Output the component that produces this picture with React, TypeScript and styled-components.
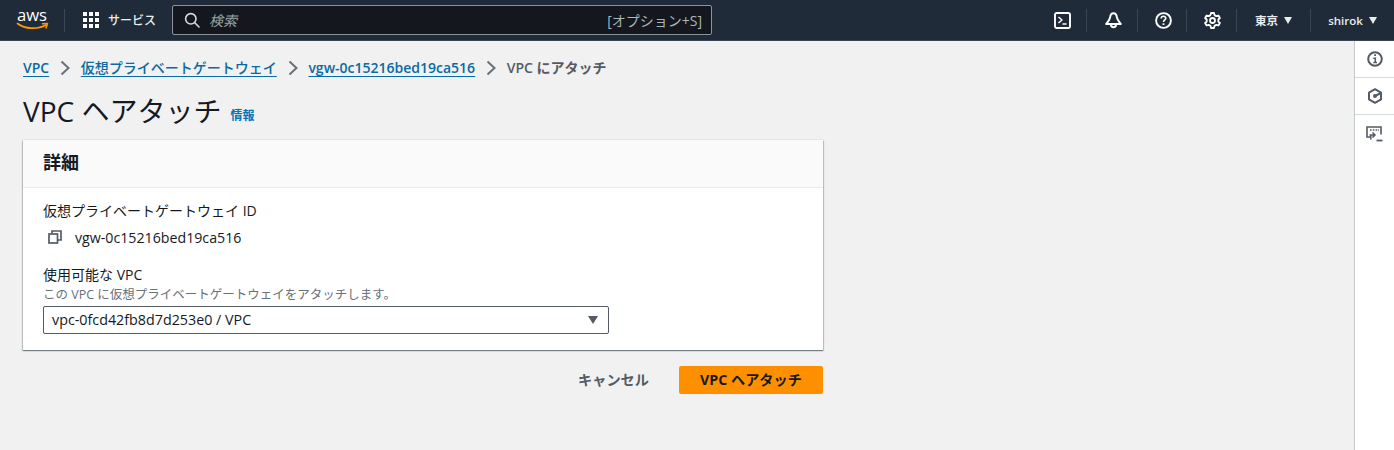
import React from "react";
import styled, { createGlobalStyle } from "styled-components";

const FONT = `"Open Sans", "Noto Sans CJK JP", sans-serif`;

const Global = createGlobalStyle`
  html, body { margin: 0; padding: 0; height: 100%; background: #f1f1f1; }
  body { font-family: ${FONT}; color: #16191f; overflow: hidden; }
  * { box-sizing: border-box; }
`;

const Page = styled.div`
  width: 1394px;
  height: 450px;
  display: flex;
  flex-direction: column;
  overflow: hidden;
`;

const TopBar = styled.header`
  height: 41px;
  flex: none;
  display: flex;
  align-items: center;
  background: #202b39;
  border-bottom: 1px solid #3a4553;
  color: #fff;
`;

const LogoSlot = styled.div`
  width: 65px;
  height: 23px;
  padding-left: 16px;
  border-right: 1px solid #3a4654;
  display: flex;
  align-items: center;
`;

const Services = styled.div`
  display: flex;
  align-items: center;
  gap: 9px;
  width: 107px;
  padding-left: 18px;
  font-size: 12px;
  font-weight: 500;
  color: #eaeded;
`;

const Search = styled.div`
  width: 540px;
  height: 30px;
  display: flex;
  align-items: center;
  padding: 0 9px 0 11px;
  background: #14171d;
  border: 1px solid #8b949c;
  border-radius: 2px;
`;

const SearchHint = styled.span`
  margin-left: 9px;
  flex: 1;
  font-style: italic;
  color: #95a5a6;
  font-size: 14px;
`;

const Shortcut = styled.span`
  color: #aab7b8;
  font-size: 14px;
`;

const TopRight = styled.div`
  margin-left: auto;
  display: flex;
  align-items: center;
  height: 23px;
`;

const IconSlot = styled.div<{ $w: number }>`
  width: ${(p) => p.$w}px;
  height: 23px;
  padding-left: 2px;
  display: flex;
  align-items: center;
  justify-content: center;
  border-right: 1px solid #3a4654;
`;

const MenuSlot = styled.div<{ $w: number; $last?: boolean }>`
  width: ${(p) => p.$w}px;
  height: 23px;
  display: flex;
  align-items: center;
  justify-content: center;
  gap: 6px;
  font-size: 11.5px;
  font-weight: 600;
  color: #eaeded;
  border-right: ${(p) => (p.$last ? "none" : "1px solid #3a4654")};
`;

const Caret = styled.span`
  width: 0;
  height: 0;
  border-left: 4.5px solid transparent;
  border-right: 4.5px solid transparent;
  border-top: 7px solid #eaeded;
`;

const Body = styled.div`
  flex: 1;
  display: flex;
  min-height: 0;
`;

const Main = styled.main`
  flex: 1;
  padding: 17px 0 0 23px;
`;

const Crumbs = styled.nav`
  height: 20px;
  display: flex;
  align-items: center;
  font-size: 14px;
  line-height: 20px;
`;

const CrumbLink = styled.a<{ $latin?: boolean }>`
  font-weight: ${(p) => (p.$latin ? 600 : 500)};
  color: #0a6aa1;
  text-decoration: underline;
  text-underline-offset: 3px;
`;

const CrumbCurrent = styled.span`
  font-weight: 600;
  color: #545b64;
`;

const CrumbSep = styled.span`
  width: 31.6px;
  display: flex;
  justify-content: center;
  align-items: center;
`;

const TitleRow = styled.div`
  margin-top: 14px;
  height: 38px;
  display: flex;
  align-items: center;
`;

const Title = styled.h1`
  margin: 0;
  font-size: 28px;
  line-height: 38px;
  font-weight: 400;
  color: #16191f;
`;

const InfoLink = styled.a`
  margin: 8px 0 0 9px;
  font-size: 12px;
  font-weight: 700;
  color: #0073bb;
`;

const Card = styled.section`
  margin-top: 10px;
  width: 800px;
  height: 210px;
  background: #fff;
  box-shadow: 0 0 1px 0 rgba(0, 28, 36, 0.3), 0 1px 1px 0 rgba(0, 28, 36, 0.3),
    1px 1px 1px 0 rgba(0, 28, 36, 0.15), -1px 1px 1px 0 rgba(0, 28, 36, 0.15);
`;

const CardHead = styled.div`
  height: 48px;
  padding: 0 0 5px 20px;
  display: flex;
  align-items: center;
  background: #fafafa;
  border-bottom: 1px solid #eaeded;
  font-size: 18px;
  font-weight: 700;
  color: #16191f;
`;

const CardBody = styled.div`
  padding: 13px 20px 0;
  display: flex;
  flex-direction: column;
`;

const Label = styled.div`
  font-size: 14px;
  line-height: 20px;
  color: #16191f;
`;

const CopyRow = styled.div`
  margin-top: 6px;
  height: 20px;
  display: flex;
  align-items: center;
  gap: 13px;
  padding-left: 5px;
  font-size: 14.2px;
  color: #16191f;
`;

const Field = styled.div`
  margin-top: 18px;
`;

const Hint = styled.div`
  margin-top: 2px;
  font-size: 12.5px;
  line-height: 15px;
  color: #687078;
`;

const Select = styled.div`
  margin-top: 4px;
  width: 566px;
  height: 28px;
  padding: 0 10px 2px 8px;
  display: flex;
  align-items: center;
  justify-content: space-between;
  background: #fff;
  border: 1px solid #545b64;
  border-radius: 2px;
  font-size: 14.3px;
  color: #16191f;
`;

const SelectCaret = styled.span`
  width: 0;
  height: 0;
  border-left: 5.5px solid transparent;
  border-right: 5.5px solid transparent;
  border-top: 8px solid #545b64;
  margin-top: 2px;
`;

const Actions = styled.div`
  width: 800px;
  margin-top: 16px;
  display: flex;
  justify-content: flex-end;
  align-items: center;
  gap: 30px;
`;

const CancelButton = styled.button`
  border: none;
  background: none;
  padding: 0 0 2px;
  font-family: inherit;
  font-size: 14.2px;
  font-weight: 700;
  color: #545b64;
`;

const PrimaryButton = styled.button`
  width: 144px;
  height: 28px;
  padding: 0 0 2px;
  border: none;
  border-radius: 2px;
  background: #fe9000;
  font-family: inherit;
  font-size: 14.2px;
  font-weight: 700;
  color: #16191f;
`;

const SideRail = styled.aside`
  width: 40px;
  flex: none;
  background: #fff;
  border-left: 1px solid #c4cacc;
  display: flex;
  flex-direction: column;
`;

const RailItem = styled.div<{ $h: number }>`
  height: ${(p) => p.$h}px;
  display: flex;
  align-items: center;
  justify-content: center;
  border-bottom: 1px solid #d5dbdb;
`;

const RailTail = styled.div`
  height: 37px;
  display: flex;
  align-items: center;
  justify-content: center;
`;

const AwsLogo = () => (
  <svg width="36" height="36" viewBox="0 0 36 36" fill="none">
    <text x="1" y="18.5" fontFamily="'Open Sans', sans-serif" fontSize="17" fill="#fff" textLength="30" lengthAdjust="spacingAndGlyphs">aws</text>
    <path d="M1.5 21.5 C9 27.5 22 27.5 30 23" stroke="#ff9900" strokeWidth="1.7" strokeLinecap="round" />
    <path d="M26.5 21.8 L31.5 21.5 L30 26" stroke="#ff9900" strokeWidth="1.5" strokeLinecap="round" strokeLinejoin="round" />
  </svg>
);

const GridIcon = () => (
  <svg width="16" height="16" viewBox="0 0 16 16" fill="#fff">
    {[0, 6, 12].flatMap((y) =>
      [0, 6, 12].map((x) => <rect key={`${x}-${y}`} x={x} y={y} width="4" height="4" />)
    )}
  </svg>
);

const SearchIcon = () => (
  <svg width="16" height="16" viewBox="0 0 16 16" fill="none" stroke="#d5dbdb" strokeWidth="1.6">
    <circle cx="6.8" cy="6.8" r="5.2" />
    <path d="M10.8 10.8 L15 15" strokeLinecap="round" />
  </svg>
);

const TerminalIcon = () => (
  <svg width="17" height="17" viewBox="0 0 17 17" fill="none" stroke="#fff" strokeWidth="1.9">
    <rect x="1" y="1" width="15" height="15" rx="1.8" />
    <path d="M4.5 5 L8 8 L4.5 11" strokeLinejoin="round" strokeWidth="1.5" />
    <path d="M8.5 12 H12.5" strokeWidth="1.5" />
  </svg>
);

const BellIcon = () => (
  <svg width="17" height="17" viewBox="0 0 17 17" fill="none" stroke="#fff" strokeWidth="2" strokeLinejoin="round">
    <path d="M8.5 1.2 C6.2 1.2 5.4 3 5.2 5 C5 7.4 3 9.5 1.2 12 H15.8 C14 9.5 12 7.4 11.8 5 C11.6 3 10.8 1.2 8.5 1.2 Z" />
    <path d="M6 12.5 A2.5 2.8 0 0 0 11 12.5" />
  </svg>
);

const HelpIcon = () => (
  <svg width="17" height="17" viewBox="0 0 17 17" fill="none" stroke="#fff" strokeWidth="1.9">
    <circle cx="8.5" cy="8.5" r="7.4" />
    <path d="M6.2 6.5 C6.2 3.6 10.8 3.6 10.8 6.3 C10.8 8 8.5 8 8.5 10" strokeWidth="1.6" />
    <path d="M8.5 11.3 V13" strokeWidth="1.8" />
  </svg>
);

const GearIcon = () => (
  <svg width="17" height="17" viewBox="0 0 17 17" fill="none" stroke="#fff" strokeWidth="1.8" strokeLinejoin="round">
    <path d="M7 1 H10 L10.5 3.1 L12.3 4.1 L14.4 3.5 L15.9 6 L14.3 7.5 V9.5 L15.9 11 L14.4 13.5 L12.3 12.9 L10.5 13.9 L10 16 H7 L6.5 13.9 L4.7 12.9 L2.6 13.5 L1.1 11 L2.7 9.5 V7.5 L1.1 6 L2.6 3.5 L4.7 4.1 L6.5 3.1 Z" />
    <circle cx="8.5" cy="8.5" r="2.5" />
  </svg>
);

const ChevronIcon = () => (
  <svg width="10" height="16" viewBox="0 0 10 16" fill="none" stroke="#687078" strokeWidth="2">
    <path d="M1.5 1.5 L8.5 8 L1.5 14.5" />
  </svg>
);

const CopyIcon = () => (
  <svg width="14" height="14" viewBox="0 0 14 14" fill="none" stroke="#545b64" strokeWidth="1.7">
    <rect x="1" y="4" width="8.5" height="9" />
    <path d="M4 3.5 V1 H13 V10 H10" />
  </svg>
);

const InfoIcon = () => (
  <svg width="16" height="16" viewBox="0 0 16 16" fill="none" stroke="#545b64" strokeWidth="2">
    <circle cx="8" cy="8" r="6.8" />
    <path d="M6.3 7.2 H8.3 V11.6 M6.3 11.6 H10" strokeWidth="1.5" />
    <path d="M7.2 4.2 H9" strokeWidth="1.8" />
  </svg>
);

const HexIcon = () => (
  <svg width="16" height="16" viewBox="0 0 16 16" fill="none" stroke="#545b64" strokeWidth="2" strokeLinejoin="round">
    <path d="M8 1.2 L14 4.6 V11.4 L8 14.8 L2 11.4 V4.6 Z" />
    <circle cx="8" cy="8" r="2" fill="#545b64" stroke="none" />
    <path d="M8 8 L14 5" strokeWidth="2" />
  </svg>
);

const FeedbackIcon = () => (
  <svg width="17" height="16" viewBox="0 0 17 16" fill="none" stroke="#545b64" strokeWidth="1.6">
    <path d="M5 11 H1 V1 H15 V8.5" />
    <path d="M4 4 H5.6 M6.8 4 H8.4 M9.6 4 H11.2 M12.2 4 H13" strokeWidth="1.6" />
    <path d="M3.5 9 H9 M6.5 6.5 L9 9 L6.5 11.5" strokeWidth="1.5" />
    <path d="M4.8 9 V13.5" strokeWidth="1.5" />
    <path d="M10.5 14.5 H16.5" strokeWidth="1.8" />
  </svg>
);

export default function App() {
  return (
    <>
      <Global />
      <Page>
        <TopBar>
          <LogoSlot>
            <AwsLogo />
          </LogoSlot>
          <Services>
            <GridIcon />
            サービス
          </Services>
          <Search>
            <SearchIcon />
            <SearchHint>検索</SearchHint>
            <Shortcut>[オプション+S]</Shortcut>
          </Search>
          <TopRight>
            <IconSlot $w={50}>
              <TerminalIcon />
            </IconSlot>
            <IconSlot $w={51}>
              <BellIcon />
            </IconSlot>
            <IconSlot $w={49}>
              <HelpIcon />
            </IconSlot>
            <IconSlot $w={50}>
              <GearIcon />
            </IconSlot>
            <MenuSlot $w={74}>
              東京
              <Caret />
            </MenuSlot>
            <MenuSlot $w={83} $last>
              shirok
              <Caret />
            </MenuSlot>
          </TopRight>
        </TopBar>
        <Body>
          <Main>
            <Crumbs>
              <CrumbLink $latin>VPC</CrumbLink>
              <CrumbSep>
                <ChevronIcon />
              </CrumbSep>
              <CrumbLink>仮想プライベートゲートウェイ</CrumbLink>
              <CrumbSep>
                <ChevronIcon />
              </CrumbSep>
              <CrumbLink $latin>vgw-0c15216bed19ca516</CrumbLink>
              <CrumbSep>
                <ChevronIcon />
              </CrumbSep>
              <CrumbCurrent>VPC にアタッチ</CrumbCurrent>
            </Crumbs>
            <TitleRow>
              <Title>VPC ヘアタッチ</Title>
              <InfoLink>情報</InfoLink>
            </TitleRow>
            <Card>
              <CardHead>詳細</CardHead>
              <CardBody>
                <Label>仮想プライベートゲートウェイ ID</Label>
                <CopyRow>
                  <CopyIcon />
                  vgw-0c15216bed19ca516
                </CopyRow>
                <Field>
                  <Label>使用可能な VPC</Label>
                  <Hint>この VPC に仮想プライベートゲートウェイをアタッチします。</Hint>
                  <Select>
                    vpc-0fcd42fb8d7d253e0 / VPC
                    <SelectCaret />
                  </Select>
                </Field>
              </CardBody>
            </Card>
            <Actions>
              <CancelButton>キャンセル</CancelButton>
              <PrimaryButton>VPC ヘアタッチ</PrimaryButton>
            </Actions>
          </Main>
          <SideRail>
            <RailItem $h={37}>
              <InfoIcon />
            </RailItem>
            <RailItem $h={37}>
              <HexIcon />
            </RailItem>
            <RailTail>
              <FeedbackIcon />
            </RailTail>
          </SideRail>
        </Body>
      </Page>
    </>
  );
}
